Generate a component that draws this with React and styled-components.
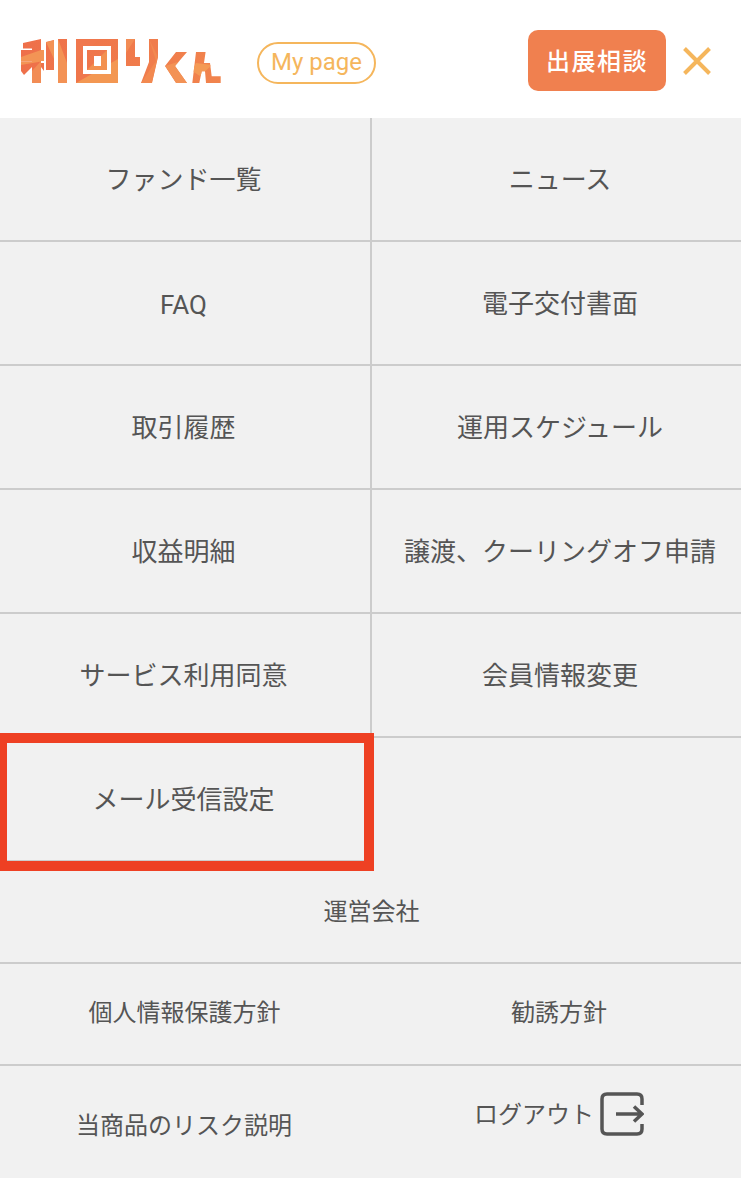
import React from 'react';
import styled, { createGlobalStyle } from 'styled-components';

const GlobalStyle = createGlobalStyle`
  html, body {
    margin: 0;
    padding: 0;
    background: #f1f1f1;
  }
  body {
    font-family: Roboto, "Noto Sans CJK JP", sans-serif;
    color: #555;
    overflow-x: hidden;
  }
`;

const mainItems = [
  ['ファンド一覧', 'ニュース'],
  ['FAQ', '電子交付書面'],
  ['取引履歴', '運用スケジュール'],
  ['収益明細', '譲渡、クーリングオフ申請'],
  ['サービス利用同意', '会員情報変更'],
];

function Logo() {
  return (
    <LogoSvg viewBox="20 37 203 46" aria-label="利回りくん">
      <defs>
        <linearGradient id="logoFill" gradientUnits="userSpaceOnUse" x1="20" y1="40" x2="222" y2="82">
          <stop offset="0" stopColor="#ee6f4a" />
          <stop offset="1" stopColor="#f1844d" />
        </linearGradient>
        <clipPath id="logoClip">
          <path d="M23 42L32 40V47.5H23ZM32 40L41 38V49H44V60H41V62H44V70L41 66V82H32V66L24 74L21 70V60.5H32V60H21V49H32ZM46 41L54 39V69H46ZM58 38H67V82H58Z" />
          <path
            clipRule="evenodd"
            d="M76 38H118V82H76ZM83 45V73H111V45ZM87 49H107V69H87ZM94 55V65H101V55Z"
          />
          <path d="M126 38H135V56H140V65H126ZM149 38H158V56L152 82H141L149 61Z" />
          <path d="M176 51H187L175 65L187 82H176L165 65Z" />
          <path d="M196 51H205.6L204 62H210L211.7 75.3H220.7V82H206L205 70.3H201.7L199.3 82H192.3Z" />
        </clipPath>
      </defs>
      <g clipPath="url(#logoClip)">
        <rect x="20" y="37" width="203" height="46" fill="url(#logoFill)" />
        <path d="M21 56L44 48V60L21 64Z" fill="#f39455" />
        <path d="M32 70L41 60V82H32Z" fill="#f28c55" />
        <path d="M46 41L54 39V58ZM58 38L67 62V82H58Z" fill="#f39255" />
        <path d="M76 82L118 58V82Z" fill="#f39752" />
        <path d="M76 38H100L76 60Z" fill="#f0774d" />
        <path d="M87 69L107 49V69Z" fill="#f3914f" />
        <path d="M126 38H135L126 52Z" fill="#f28c55" />
        <path d="M149 38L158 56L152 82H141L156 60Z" fill="#f28950" />
        <path d="M165 65L187 58V82H176Z" fill="#f39255" />
        <path d="M196 62L212 64L200 75L192 70Z" fill="#f49a55" />
      </g>
    </LogoSvg>
  );
}

function CloseIcon() {
  return (
    <CloseSvg viewBox="0 0 28 28">
      <path d="M1.5 1.5L26.5 26.5M26.5 1.5L1.5 26.5" />
    </CloseSvg>
  );
}

function LogoutIcon() {
  return (
    <LogoutSvg viewBox="0 0 44 44">
      <path d="M42 13V7Q42 2 37 2H7Q2 2 2 7V37Q2 42 7 42H37Q42 42 42 37V32" />
      <path d="M16 22H42M34 14.5L42 22L34 29.5" />
    </LogoutSvg>
  );
}

export default function App() {
  return (
    <Page>
      <GlobalStyle />
      <Header>
        <Logo />
        <MyPage>My page</MyPage>
        <HeaderRight>
          <Consult>出展相談</Consult>
          <CloseIcon />
        </HeaderRight>
      </Header>

      {mainItems.map(([left, right]) => (
        <MainRow key={left}>
          <LeftCell $latin={left === 'FAQ'}>{left}</LeftCell>
          <RightCell>{right}</RightCell>
        </MainRow>
      ))}

      <MainRow>
        <MailCell>
          メール受信設定
          <Highlight />
        </MailCell>
        <div />
      </MainRow>

      <CompanyRow>運営会社</CompanyRow>

      <PolicyRow>
        <PolicyCell>個人情報保護方針</PolicyCell>
        <PolicyCell $right>勧誘方針</PolicyCell>
      </PolicyRow>

      <LastRow>
        <RiskCell>当商品のリスク説明</RiskCell>
        <LogoutCell>
          ログアウト
          <LogoutIcon />
        </LogoutCell>
      </LastRow>
    </Page>
  );
}

const Page = styled.div`
  width: 741px;
  height: 1178px;
  overflow: hidden;
  background: #f1f1f1;
`;

const Header = styled.header`
  height: 118px;
  background: #fff;
  display: flex;
  align-items: center;
  padding-left: 20px;
  box-sizing: border-box;
`;

const LogoSvg = styled.svg`
  width: 203px;
  height: 46px;
  flex: none;
  margin-top: 3px;
`;

const MyPage = styled.a`
  margin-left: 34px;
  width: 119px;
  height: 42px;
  margin-top: 7px;
  box-sizing: border-box;
  border: 2px solid #f5b65c;
  border-radius: 21px;
  padding-bottom: 2px;
  display: flex;
  align-items: center;
  justify-content: center;
  color: #f5b65c;
  font-size: 24px;
  background: #fff;
`;

const HeaderRight = styled.div`
  margin-left: auto;
  display: flex;
  align-items: center;
  padding-right: 30px;
  margin-top: 3px;
`;

const Consult = styled.button`
  width: 138px;
  height: 61px;
  border: 0;
  border-radius: 10px;
  background: #f0804f;
  color: #fff;
  font-family: inherit;
  font-size: 24px;
  font-weight: 500;
  letter-spacing: 1.5px;
  padding: 0 0 2px;
  margin-right: 17px;
`;

const CloseSvg = styled.svg`
  width: 28px;
  height: 28px;
  fill: none;
  stroke: #f5b65c;
  stroke-width: 4;
`;

const MainRow = styled.div`
  display: grid;
  grid-template-columns: 372px 369px;
  height: 124px;
  font-size: 26px;
`;

const LeftCell = styled.a`
  display: flex;
  align-items: center;
  justify-content: center;
  box-sizing: border-box;
  padding-right: 3px;
  padding-bottom: ${(p) => (p.$latin ? '0' : '4px')};
  padding-top: ${(p) => (p.$latin ? '4px' : '0')};
  border-right: 2px solid #ccc;
  border-bottom: 2px solid #ccc;
`;

const RightCell = styled.a`
  display: flex;
  align-items: center;
  justify-content: center;
  box-sizing: border-box;
  padding-left: 7px;
  padding-bottom: 4px;
  border-bottom: 2px solid #ccc;
`;

const MailCell = styled(LeftCell)`
  position: relative;
  border-right: 0;
  padding-right: 5px;
`;

const Highlight = styled.span`
  position: absolute;
  left: -3px;
  top: -5px;
  width: 377px;
  height: 138px;
  box-sizing: border-box;
  border: 10px solid #ee4023;
`;

const CompanyRow = styled.a`
  display: flex;
  align-items: center;
  justify-content: center;
  height: 102px;
  box-sizing: border-box;
  padding-bottom: 6px;
  padding-left: 2px;
  font-size: 24px;
  border-bottom: 2px solid #ccc;
`;

const PolicyRow = styled.div`
  display: grid;
  grid-template-columns: 372px 369px;
  height: 102px;
  font-size: 24px;
  border-bottom: 2px solid #ccc;
  box-sizing: border-box;
`;

const PolicyCell = styled.a`
  display: flex;
  align-items: center;
  justify-content: center;
  padding-bottom: 8px;
  padding-right: ${(p) => (p.$right ? '0' : '3px')};
  padding-left: ${(p) => (p.$right ? '5px' : '0')};
`;

const LastRow = styled.div`
  display: grid;
  grid-template-columns: 372px 369px;
  height: 112px;
  font-size: 24px;
`;

const RiskCell = styled.a`
  display: flex;
  align-items: center;
  justify-content: center;
  padding-right: 4px;
  padding-top: 2px;
`;

const LogoutCell = styled.a`
  display: flex;
  align-items: center;
  justify-content: center;
  padding-left: 5px;
  padding-bottom: 20px;
  gap: 6px;
`;

const LogoutSvg = styled.svg`
  width: 44px;
  height: 44px;
  margin-top: 4px;
  fill: none;
  stroke: #555;
  stroke-width: 3.5;
`;
